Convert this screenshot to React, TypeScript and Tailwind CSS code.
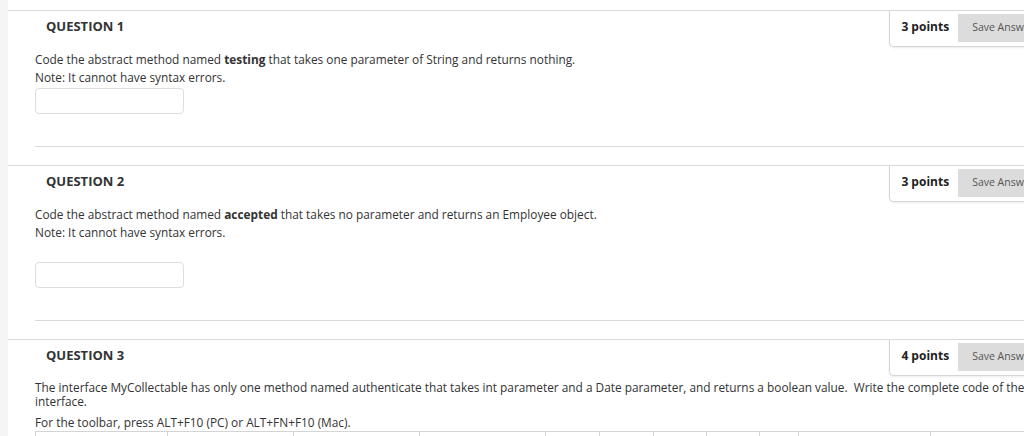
import React from "react";

type Q = {
  num: number;
  points: number;
  lines: React.ReactNode[];
  gapBeforeInput?: boolean;
};

const QUESTIONS: Q[] = [
  {
    num: 1,
    points: 3,
    lines: [
      <>
        Code the abstract method named <b>testing</b> that takes one parameter of String and returns nothing.
      </>,
      <>Note: It cannot have syntax errors.</>,
    ],
  },
  {
    num: 2,
    points: 3,
    gapBeforeInput: true,
    lines: [
      <>
        Code the abstract method named <b>accepted</b> that takes no parameter and returns an Employee object.
      </>,
      <>Note: It cannot have syntax errors.</>,
    ],
  },
];

// separator positions of the editor toolbar (relative to page)
const TOOL_SEPS = [167, 293, 419, 545, 599, 653, 706, 759, 798, 930];

function PointsBox({ points }: { points: number }) {
  return (
    <div className="flex items-start h-[36px] pl-[11px] -mr-[24px] bg-white border-l border-b border-[#d6d6d6] rounded-bl-[5px] shadow-[0_1px_2px_rgba(0,0,0,0.08)]">
      <span className="mt-[7px] text-[12px] font-bold text-[#222] leading-[18px] whitespace-nowrap">
        {points} points
      </span>
      <button className="ml-[9px] mt-[3px] h-[28px] px-[14px] bg-[#dcdcdc] text-[10.5px] text-[#555] whitespace-nowrap">
        Save Answer
      </button>
    </div>
  );
}

function Header({ num, points }: { num: number; points: number }) {
  return (
    <div className="flex items-start justify-between">
      <h3 className="pl-[38px] pt-[6px] text-[13px] font-bold leading-[18px] text-[#333]">QUESTION {num}</h3>
      <PointsBox points={points} />
    </div>
  );
}

function Question({ q }: { q: Q }) {
  return (
    <section className="border-t border-[#dadada]">
      <Header num={q.num} points={q.points} />
      <div className="pl-[27px] pt-[3px]">
        {q.lines.map((l, i) => (
          <p key={i} className="text-[11.85px] leading-[18px]">
            {l}
          </p>
        ))}
        <div
          className={
            (q.gapBeforeInput ? "mt-[21px] " : "mt-[2px] ") +
            "w-[149px] h-[26px] border border-[#dedede] rounded-[4px] bg-white"
          }
        />
        <div className="mt-[32px] mb-[18px] border-t border-[#dadada]" />
      </div>
    </section>
  );
}

export default function App() {
  return (
    <div className="flex w-[1024px] h-[436px] overflow-hidden bg-white font-['Open_Sans',sans-serif] text-[#333]">
      <div className="w-2 shrink-0 bg-[#f5f5f5]" />
      <div className="flex-1 min-w-0 pt-[10px]">
        {QUESTIONS.map((q) => (
          <Question key={q.num} q={q} />
        ))}
        <section className="border-t border-[#dadada]">
          <Header num={3} points={4} />
          <div className="pl-[27px] pt-[3px] -mr-[12px]">
            <p className="text-[11.85px] leading-[14px] pt-[1px]">
              The interface MyCollectable has only one method named authenticate that takes int parameter and a Date parameter, and returns a boolean value.&nbsp; Write the complete code of the interface.
            </p>
            <p className="mt-[5px] text-[11.85px] leading-[18px]">For the toolbar, press ALT+F10 (PC) or ALT+FN+F10 (Mac).</p>
            <div className="flex h-[20px] border-t border-l border-[#d4d4d4]">
              {TOOL_SEPS.map((x, i) => (
                <div
                  key={x}
                  className="shrink-0 border-r border-[#d4d4d4]"
                  style={{ width: x - (i === 0 ? 35 : TOOL_SEPS[i - 1]) }}
                />
              ))}
            </div>
          </div>
        </section>
      </div>
    </div>
  );
}
